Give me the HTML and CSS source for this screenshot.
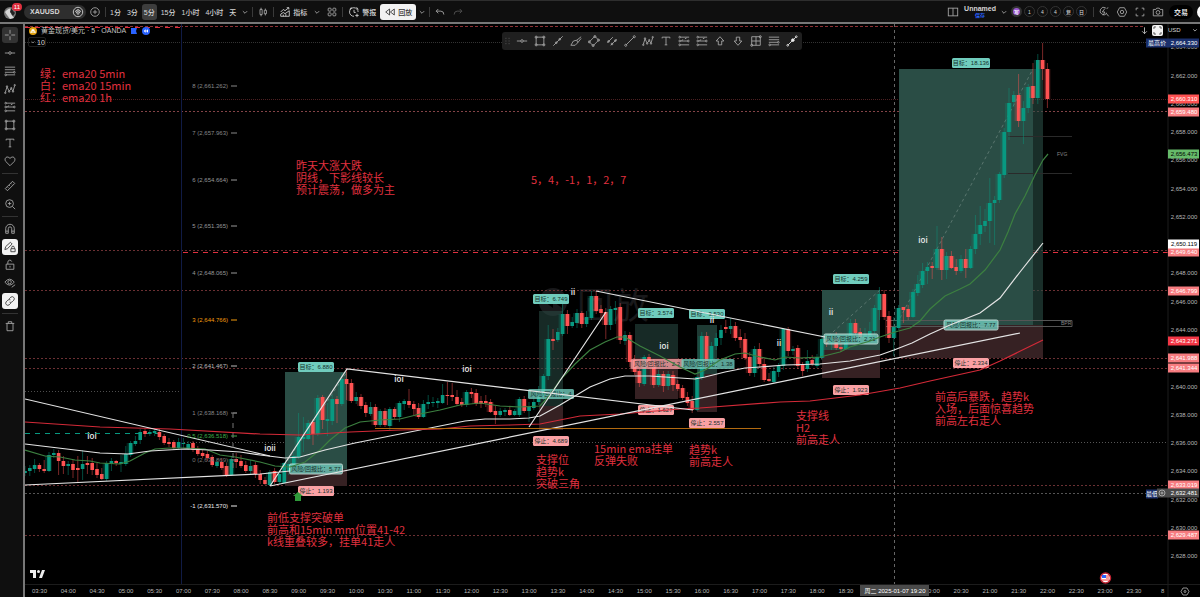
FILE: index.html
```html
<!DOCTYPE html>
<html lang="zh-CN">
<head>
  <meta charset="UTF-8">
  <meta name="viewport" content="width=device-width, initial-scale=1.0">
  <title>XAUUSD</title>
  <link rel="stylesheet" href="styles.css">
</head>
<body>
  <!-- Icon sprite -->
  <svg class="sprite" aria-hidden="true">
    <symbol id="i-plus" viewBox="0 0 14 14"><circle cx="7" cy="7" r="5"/><path d="M4.500 7h5M7 4.500v5"/></symbol>
    <symbol id="i-chev" viewBox="0 0 14 14"><path d="M4.500 6l2.500 2.500L9.500 6"/></symbol>
    <symbol id="i-candles" viewBox="0 0 14 14"><path d="M3.500 4h2.500v6H3.500zM4.750 2v2M4.750 10v2M8.500 5h2.500v4H8.500zM9.750 3v2M9.750 9v2"/></symbol>
    <symbol id="i-indicator" viewBox="0 0 14 14"><path d="M2 12V9.500l3-2 2 1.500 5-3.500V12zM5 10v2M8 9.500V12M2 7l3-3 2 1.500L11.500 2M9 2h2.500v2"/></symbol>
    <symbol id="i-grid" viewBox="0 0 14 14"><rect x="2.500" y="2.500" width="3.500" height="3.500" rx="1"/><rect x="8" y="2.500" width="3.500" height="3.500" rx="1"/><rect x="2.500" y="8" width="3.500" height="3.500" rx="1"/><rect x="8" y="8" width="3.500" height="3.500" rx="1"/></symbol>
    <symbol id="i-alarm" viewBox="0 0 14 14"><path d="M11.800 7A5 5 0 1 0 7 12M7 4.500V7.500H9M2 4l2-2.500M10 1.500L12 4M10.500 9v4M8.500 11h4"/></symbol>
    <symbol id="i-replay" viewBox="0 0 14 14"><path d="M6.500 3.500v7L2 7zM12 3.500v7L7.500 7z"/></symbol>
    <symbol id="i-undo" viewBox="0 0 14 14"><path d="M5 3.500L2.500 6 5 8.500M2.500 6H8q3.500 0 3.500 4"/></symbol>
    <symbol id="i-redo" viewBox="0 0 14 14"><path d="M9 3.500L11.500 6 9 8.500M11.500 6H6Q2.500 6 2.500 10"/></symbol>
    <symbol id="i-layout" viewBox="0 0 14 14"><rect x="1.500" y="2.500" width="11" height="9"/><path d="M7 2.500v9"/></symbol>
    <symbol id="i-search" viewBox="0 0 14 14"><path d="M9.500 8.500l3 3.500M8 3L5 7h3L6 11M9 2.200A4.300 4.300 0 1 0 10.500 8M10 3l2-1"/></symbol>
    <symbol id="i-gear" viewBox="0 0 14 14"><path d="M4.200 2h5.600l2.700 5-2.700 5H4.200L1.500 7z"/><circle cx="7" cy="7" r="2"/></symbol>
    <symbol id="i-full" viewBox="0 0 14 14"><path d="M2.500 5V2.500H5M9 2.500h2.500V5M11.500 9v2.500H9M5 11.500H2.500V9"/></symbol>
    <symbol id="i-camera" viewBox="0 0 14 14"><path d="M1.500 4h3L5.500 2.500h3L9.500 4h3v7.500h-11z"/><circle cx="7" cy="7.500" r="2.200"/></symbol>
    <symbol id="i-cross" viewBox="0 0 14 14"><path d="M7 1v4.500M7 8.500V13M1 7h4.500M8.500 7H13"/></symbol>
    <symbol id="i-hline" viewBox="0 0 14 14"><path d="M1 7h4.500M8.500 7H13"/><circle cx="7" cy="7" r="1.500"/></symbol>
    <symbol id="i-fib" viewBox="0 0 14 14"><path d="M1 2.500h12M1 5.500h12M1 8.500h10M3 11.500h10"/><circle cx="12" cy="8.500" r="1"/><circle cx="2" cy="11.500" r="1"/></symbol>
    <symbol id="i-wave" viewBox="0 0 14 14"><path d="M1.500 11L3.500 4.500 6 9.500 8.500 6.500 10.500 9.500 12.500 3"/><circle cx="1.500" cy="11.500" r=".8"/><circle cx="3.500" cy="4" r=".8"/><circle cx="6" cy="10" r=".8"/><circle cx="8.500" cy="6" r=".8"/><circle cx="10.500" cy="10" r=".8"/><circle cx="12.500" cy="2.500" r=".8"/></symbol>
    <symbol id="i-forecast" viewBox="0 0 14 14"><path d="M3 2.500h10M3 7h8M3 11.500h10M4 6.500l2-1M8 4.500l2-1"/><circle cx="2" cy="2.500" r="1"/><circle cx="2" cy="7" r="1"/><circle cx="2" cy="11.500" r="1"/><circle cx="12" cy="7" r="1"/></symbol>
    <symbol id="i-rect" viewBox="0 0 14 14"><path d="M2.500 2.500h9v9h-9z"/><circle cx="2.500" cy="2.500" r="1.200"/><circle cx="11.500" cy="2.500" r="1.200"/><circle cx="2.500" cy="11.500" r="1.200"/><circle cx="11.500" cy="11.500" r="1.200"/></symbol>
    <symbol id="i-text" viewBox="0 0 14 14"><path d="M2.500 4V2.500h9V4M7 2.500v9M5.500 11.500h3"/></symbol>
    <symbol id="i-heart" viewBox="0 0 14 14"><path d="M7 12.500L2 7.500C-.5 4 3.500 0 7 4 10.500 0 14.500 4 12 7.500z"/></symbol>
    <symbol id="i-ruler" viewBox="0 0 14 14"><path d="M1.500 10L10 1.500 12.500 4 4 12.500zM4 8l1 1M6 6l1 1M8 4l1 1"/></symbol>
    <symbol id="i-zoom" viewBox="0 0 14 14"><circle cx="6.500" cy="6.500" r="4.500"/><path d="M10 10l3 3M4.500 6.500h4M6.500 4.500v4"/></symbol>
    <symbol id="i-magnet" viewBox="0 0 14 14"><path d="M2 12V6.500a5 5 0 0 1 10 0V12H9V6.500a2 2 0 0 0-4 0V12zM2 9.500h3M9 9.500h3"/></symbol>
    <symbol id="i-penlock" viewBox="0 0 14 14"><path d="M1 10l1-3.500L7.500 1.500l2 2L4 9zM8 9h5v3.500H8zM9 9V7.500a1.500 1.500 0 0 1 3 0V9"/></symbol>
    <symbol id="i-unlock" viewBox="0 0 14 14"><path d="M2.500 6h9v6h-9zM4.500 6V3.500a2.300 2.300 0 0 1 4.500-.5M7 8v2"/></symbol>
    <symbol id="i-eye" viewBox="0 0 14 14"><path d="M1 6q5.500-7 11 0-5.500 7-11 0z"/><circle cx="6.500" cy="6" r="2"/><path d="M9 12l4-3"/></symbol>
    <symbol id="i-link" viewBox="0 0 14 14"><path d="M6 4.500l2-2a2.500 2.500 0 0 1 3.500 3.500l-2 2a2.500 2.500 0 0 1-3 .3M8 9.500l-2 2A2.500 2.500 0 0 1 2.500 8l2-2a2.500 2.500 0 0 1 3-.3"/></symbol>
    <symbol id="i-trash" viewBox="0 0 14 14"><path d="M2 4h10M5 4V2h4v2M3.500 4v8.500h7V4"/></symbol>
    <symbol id="i-grip" viewBox="0 0 14 14"><path d="M5 3v1M9 3v1M5 6.500v1M9 6.500v1M5 10v1M9 10v1"/></symbol>
    <symbol id="i-line" viewBox="0 0 14 14"><path d="M1.500 12.500l11-11"/><circle cx="5" cy="9" r="1"/><circle cx="9" cy="5" r="1"/></symbol>
    <symbol id="i-brush" viewBox="0 0 14 14"><path d="M1 12l3-5 4-1 1 3-3 3zM8 6l5-4M9 9l4-5"/></symbol>
    <symbol id="i-rot" viewBox="0 0 14 14"><path d="M1.500 8L8 1.500 12.500 6 6 12.500z"/><circle cx="1.500" cy="8" r="1.200"/><circle cx="8" cy="1.800" r="1.200"/><circle cx="12.300" cy="6" r="1.200"/><circle cx="6" cy="12.300" r="1.200"/></symbol>
    <symbol id="i-channel" viewBox="0 0 14 14"><path d="M1.500 9L8 2.500M5.500 12L12.500 5"/><circle cx="3" cy="7.500" r="1"/><circle cx="11" cy="6.500" r="1"/><circle cx="7" cy="10.500" r="1"/></symbol>
    <symbol id="i-trend" viewBox="0 0 14 14"><path d="M2.500 11.500l9-9"/><circle cx="2" cy="12" r="1.200"/><circle cx="12" cy="2" r="1.200"/></symbol>
    <symbol id="i-arrow" viewBox="0 0 14 14"><path d="M2.500 11.500l9-9"/><circle cx="2" cy="12" r="1"/><circle cx="8" cy="6" r="1.500" fill="currentColor"/><circle cx="12" cy="2" r="1"/></symbol>
    <symbol id="i-up" viewBox="0 0 14 14"><path d="M7 2L2.500 7H5v4.500h4V7h2.500z"/></symbol>
    <symbol id="i-down" viewBox="0 0 14 14"><path d="M7 12L2.500 7H5V2.500h4V7h2.500z"/></symbol>
    <symbol id="i-table" viewBox="0 0 14 14"><path d="M2 2h10v10H2zM7 2v10M2 7h10"/><circle cx="12" cy="2" r="1.200"/><circle cx="2" cy="12" r="1.200"/></symbol>
    <symbol id="i-down2" viewBox="0 0 14 14"><path d="M7 3v8M4 8l3 3 3-3"/></symbol>
  </svg>

  <header class="topbar">
    <button class="avatar" aria-label="账户">
      <svg viewBox="0 0 16 16"><circle cx="7" cy="9" r="6" fill="#777"/><path d="M2 8q4-5 7-3l2 3-3 2 3 4-4 1-3-4z" fill="#d5d5d5"/><path d="M8 4l4 5-2 3-3-4z" fill="#222"/></svg>
      <span class="badge">11</span>
    </button>
    <button class="symbol">XAUUSD <svg viewBox="0 0 14 14"><circle cx="7" cy="7" r="5.500"/><path d="M4 6l3-2 3 2-3 4z"/><circle cx="7" cy="6.500" r="1"/></svg></button>
    <button class="tool" aria-label="对比"><svg><use href="#i-plus"/></svg></button>
    <span class="sep"></span>
    <nav class="frames">
      <button>1分</button><button>3分</button><button class="active">5分</button><button>15分</button><button>1小时</button><button>4小时</button><button>天</button>
    </nav>
    <button class="chev" aria-label="更多周期"><svg><use href="#i-chev"/></svg></button>
    <span class="sep"></span>
    <button class="tool" aria-label="K线图"><svg><use href="#i-candles"/></svg></button>
    <span class="sep"></span>
    <button class="labelled"><svg><use href="#i-indicator"/></svg>指标</button>
    <button class="chev" aria-label="收藏指标"><svg><use href="#i-chev"/></svg></button>
    <button class="tool" aria-label="模板"><svg><use href="#i-grid"/></svg></button>
    <span class="sep"></span>
    <button class="labelled"><svg><use href="#i-alarm"/></svg>警报</button>
    <button class="labelled on"><svg><use href="#i-replay"/></svg>回放</button>
    <button class="chev" aria-label="回放选项"><svg><use href="#i-chev"/></svg></button>
    <span class="sep"></span>
    <button class="tool" aria-label="撤销"><svg><use href="#i-undo"/></svg></button>
    <button class="tool dim" aria-label="重做"><svg><use href="#i-redo"/></svg></button>

    <div class="right">
      <button class="tool" aria-label="布局"><svg><use href="#i-layout"/></svg></button>
      <button class="layout-name">Unnamed<small>保存</small></button>
      <button class="chev" aria-label="布局列表"><svg><use href="#i-chev"/></svg></button>
      <div class="dots">
        <button class="purple">写</button><button>1</button><button>4</button><button>4</button><button>复</button><button>日</button>
      </div>
      <span class="sep"></span>
      <button class="tool" aria-label="快速搜索"><svg><use href="#i-search"/></svg></button>
      <button class="tool" aria-label="设置"><svg><use href="#i-gear"/></svg></button>
      <button class="tool" aria-label="全屏"><svg><use href="#i-full"/></svg></button>
      <button class="tool" aria-label="快照"><svg><use href="#i-camera"/></svg></button>
      <button class="trade">交易</button>
      <button class="publish" aria-label="发布"></button>
    </div>
  </header>

  <main class="workspace">
    <aside class="sidebar">
      <button class="active" aria-label="十字线"><svg><use href="#i-cross"/></svg></button>
      <button aria-label="水平线"><svg><use href="#i-hline"/></svg></button>
      <button aria-label="斐波那契"><svg><use href="#i-fib"/></svg></button>
      <button aria-label="形态"><svg><use href="#i-wave"/></svg></button>
      <button aria-label="预测"><svg><use href="#i-forecast"/></svg></button>
      <button aria-label="矩形"><svg><use href="#i-rect"/></svg></button>
      <button aria-label="文本"><svg><use href="#i-text"/></svg></button>
      <button aria-label="图标"><svg><use href="#i-heart"/></svg></button>
      <hr>
      <button aria-label="测量"><svg><use href="#i-ruler"/></svg></button>
      <button aria-label="放大"><svg><use href="#i-zoom"/></svg></button>
      <hr>
      <button aria-label="磁铁"><svg><use href="#i-magnet"/></svg></button>
      <button class="on" aria-label="保持绘图"><svg><use href="#i-penlock"/></svg></button>
      <button aria-label="锁定"><svg><use href="#i-unlock"/></svg></button>
      <button aria-label="隐藏"><svg><use href="#i-eye"/></svg></button>
      <button class="on" aria-label="同步"><svg><use href="#i-link"/></svg></button>
      <hr>
      <button aria-label="删除"><svg><use href="#i-trash"/></svg></button>
    </aside>

    <section class="chart">
      <svg class="plot" viewBox="25 24 1175 573" preserveAspectRatio="xMinYMin meet">
        <g class="watermark">
          <circle cx="553" cy="302" r="14"/>
          <path d="M553 296v12l-8-6zM562 296v12l-8-6z" fill="#000"/>
          <text x="577" y="319">回放</text>
        </g>
        <g id="levels"></g>
        <path d="M181.500 24V584" stroke="#101b45"/>
        <path d="M894.500 24V584" stroke="#666" stroke-dasharray="3 3"/>
        <g id="trades"></g>
        <g fill="none" stroke="#555">
          <path d="M886 320.500H1072V326.500H886"/>
          <path d="M1008 136.500H1072M1008 173.500H1072" stroke="#2a2a2a"/>
        </g>
        <path d="M284 466L347 372M824 340L880 290M900 318L1033 69" stroke="#78908a" stroke-width=".6" stroke-dasharray="3 3" fill="none"/>
        <g id="candles"></g>
        <g id="tags"></g>

        <!-- moving averages -->
        <g class="ma">
          <polyline stroke="#3c8040" points="25,450 45,456 60,457 75,460 90,461 100,463 120,464 130,461 145,453 155,449 170,448 185,448 205,449 220,455 235,457 260,462 275,466 290,467 305,462 320,450 330,440 345,428 360,422 380,420 400,419 420,414 440,410 460,405 480,403 500,406 520,407 540,406 550,395 560,380 575,364 590,350 605,342 617,337 625,337 640,346 660,356 680,367 695,374 705,370 720,360 735,354 745,353 760,357 775,360 785,357 800,358 820,357 840,352 850,347 870,341 880,337 895,332 910,328 920,321 930,309 945,296 960,289 970,284 985,270 1000,250 1008,232 1015,214 1025,196 1035,175 1043,160 1048,154"/>
          <polyline class="w" points="25,444 50,447 75,450 100,453 128,454 150,451 185,449 210,450 240,452 260,455 285,458 300,457 325,450 355,443 390,436 430,428 465,421 485,419 510,419 529,418 540,416 560,405 590,387 610,379 625,376 650,376 680,378 695,379 705,377 725,372 745,368 760,367 785,365 820,364 850,361 880,355 894,350 912,343 930,334 950,325 980,313 1000,298 1020,272 1043,243"/>
          <polyline stroke="#d32a38" points="25,422 100,427 170,429 260,434 300,435 350,432 400,430 440,429 470,426 510,425 540,424 580,416 620,414 680,409 700,408 780,402 810,401 860,395 900,388 930,381 980,370 1000,361 1043,340"/>
        </g>
        <!-- drawn trend lines -->
        <g class="ma w">
          <path d="M25 399L270 456M25 485L260 474 290 471M270 486L347 369 693 410M270 486L1020 333M529 427L606 312M596 291L825 337"/>
        </g>
        <path d="M375 428.500H761" stroke="#b26a10"/>
        <path d="M298 492l5 4h-2v5h-6v-5h-2z" fill="#2f9a3a"/>

        <g id="fib"></g>
        <path d="M233 413h4M233 413V470" stroke="#777" stroke-dasharray="5 5" fill="none"/>
        <g id="marks" class="marks"></g>
        <g id="notes" class="notes"></g>

        <text class="tiny" x="1057" y="156">FVG</text>
        <text class="tiny" x="1061" y="325">BPR</text>

        <!-- brand mark -->
        <path d="M30 570h6v8h-3v-5h-3zM39 578l3-8h3l-3 8z" fill="#eee"/><circle cx="38.500" cy="571.500" r="1.500" fill="#eee"/>
        <g>
          <circle cx="1105.500" cy="578" r="5" fill="#fff" stroke="#c22433" stroke-width="1.500"/>
          <path d="M1102 575h4v3h-4z" fill="#2962ff"/><path d="M1106 576h3M1106 578h3M1102 580h7" stroke="#e33"/>
        </g>

        <!-- axes -->
        <path d="M1168 24V597M25 584.500H1200" stroke="#1c1c1c"/>
        <g id="axis"></g>
        <g fill="none" stroke="#ccc" stroke-width=".7"><path d="M1183 588h4l2 3.500-2 3.500h-4l-2-3.500z"/><circle cx="1185" cy="591.500" r="1"/></g>
      </svg>

      <div class="legend">
        <svg class="gold" viewBox="0 0 14 14"><circle cx="7" cy="7" r="7"/><path d="M5 4h4l1 3H4zM3 7.500h3.500V10H2zM7.500 7.500H11L12 10H7.500z" fill="#fff"/></svg>
        <span>黄金现货/美元 · 5 · OANDA</span>
        <svg class="flag" viewBox="0 0 8 8"><path d="M1 1h6L6 4l1 3H1z"/></svg>
        <svg class="rew" viewBox="0 0 14 14"><circle cx="7" cy="7" r="7"/><path d="M6.500 4v6L3 7zM10.500 4v6L7 7z" fill="#fff"/></svg>
      </div>
      <button class="collapse"><svg><use href="#i-chev"/></svg>10</button>

      <div class="favorites">
        <svg class="grip"><use href="#i-grip"/></svg>
        <button aria-label="水平线"><svg><use href="#i-hline"/></svg></button>
        <button aria-label="矩形"><svg><use href="#i-rect"/></svg></button>
        <button aria-label="直线"><svg><use href="#i-line"/></svg></button>
        <button aria-label="画笔"><svg><use href="#i-brush"/></svg></button>
        <button aria-label="旋转矩形"><svg><use href="#i-rot"/></svg></button>
        <button aria-label="平行通道"><svg><use href="#i-channel"/></svg></button>
        <button aria-label="趋势线"><svg><use href="#i-trend"/></svg></button>
        <button aria-label="形态"><svg><use href="#i-wave"/></svg></button>
        <button aria-label="文本"><svg><use href="#i-text"/></svg></button>
        <button aria-label="多头"><svg><use href="#i-forecast"/></svg></button>
        <button aria-label="空头"><svg><use href="#i-forecast"/></svg></button>
        <button aria-label="向上箭头"><svg><use href="#i-up"/></svg></button>
        <button aria-label="向下箭头"><svg><use href="#i-down"/></svg></button>
        <button aria-label="江恩箱"><svg><use href="#i-table"/></svg></button>
        <button aria-label="斐波那契"><svg><use href="#i-fib"/></svg></button>
        <button class="bright" aria-label="箭头"><svg><use href="#i-arrow"/></svg></button>
      </div>

      <div class="scale-tools">
        <button aria-label="下移"><svg><use href="#i-down2"/></svg></button>
        <button class="on" aria-label="最大化"><svg><use href="#i-full"/></svg></button>
        <select aria-label="货币"><option>USD</option></select>
        <svg><use href="#i-chev"/></svg>
      </div>
    </section>
  </main>

  <script src="chart.js"></script>
</body>
</html>
```
FILE: styles.css
```css
* {
  box-sizing: border-box;
}
body {
  margin: 0;
  height: 100vh;
  display: flex;
  flex-direction: column;
  overflow: hidden;
  background: #000;
  color: #d6d6d6;
  font-family: "Liberation Sans", "Noto Sans CJK SC", sans-serif;
  font-size: 7px;
}
button, select {
  margin: 0;
  padding: 0;
  border: 0;
  background: none;
  color: inherit;
  font: inherit;
  cursor: pointer;
}
svg {
  fill: none;
  stroke: currentColor;
}
button svg {
  display: block;
  width: 12px;
  height: 12px;
  flex: none;
}
.sprite {
  display: none;
}

/* top bar */
.topbar {
  display: flex;
  align-items: center;
  flex: none;
  height: 24px;
  padding-left: 3px;
  background: #0f0f0f;
  border-top: 1px solid #2e2e2e;
  border-bottom: 2px solid #777;
  font-weight: 500;
}
.topbar button {
  display: flex;
  align-items: center;
  justify-content: center;
  flex: none;
  height: 16px;
  border-radius: 3px;
}
.topbar .avatar {
  position: relative;
  width: 16px;
  margin-right: 5px;
}
.avatar svg {
  width: 16px;
  height: 16px;
  stroke: none;
}
.badge {
  position: absolute;
  top: -1px;
  right: -3px;
  padding: 0 2px;
  border-radius: 4px;
  background: #e0303f;
  color: #fff;
  font-size: 6px;
  line-height: 8px;
}
.topbar .symbol {
  justify-content: space-between;
  width: 62px;
  height: 14px;
  padding: 0 2px 0 6px;
  border-radius: 7px;
  background: #2e2e2e;
  font-weight: bold;
}
.topbar .tool {
  width: 18px;
  color: #aaa;
}
.topbar .dim {
  color: #555;
}
.topbar .chev {
  width: 12px;
  color: #aaa;
}
.sep {
  flex: none;
  width: 1px;
  height: 10px;
  margin: 0 1px;
  background: #3a3a3a;
}
.frames {
  display: flex;
}
.frames button {
  padding: 0 2px;
  margin: 0 1px;
}
.frames .active {
  background: #3d3d3d;
}
.topbar .labelled {
  gap: 2px;
  padding: 0 4px;
}
.topbar .on {
  background: #f2f2f2;
  color: #333;
}
.right {
  display: flex;
  align-items: center;
  margin-left: auto;
  overflow: hidden;
}
.topbar .layout-name {
  flex-direction: column;
  padding: 0 2px;
  font-weight: bold;
  line-height: 8px;
}
.layout-name small {
  color: #2962ff;
  font-size: 5px;
  line-height: 5px;
}
.dots {
  display: flex;
  gap: 2px;
  margin: 0 5px 0 1px;
}
.topbar .dots button {
  width: 11px;
  height: 11px;
  border: 1px solid #333;
  border-radius: 50%;
  font-size: 5px;
}
.topbar .dots .purple {
  border-width: 2px;
  background: #9b59d0;
  color: #fff;
}
.topbar .trade {
  width: 24px;
  height: 14px;
  margin: 0 4px 0 2px;
  border-radius: 7px;
  background: #000;
  color: #fff;
}
.topbar .publish {
  width: 14px;
  height: 14px;
  margin-right: -11px;
  border-radius: 7px;
  background: #fff;
}

/* drawing tools */
.workspace {
  display: flex;
  flex: 1;
  min-height: 0;
}
.sidebar {
  display: flex;
  flex-direction: column;
  flex: none;
  width: 25px;
  padding: 2px 4px 0 1px;
  background: #0f0f0f;
  border-right: 2px solid #777;
}
.sidebar button {
  display: flex;
  align-items: center;
  justify-content: center;
  flex: none;
  width: 16px;
  height: 16px;
  margin: 1px;
  border-radius: 3px;
  color: #aaa;
}
.sidebar .active {
  background: #333;
}
.sidebar .on {
  background: #f2f2f2;
  color: #333;
}
.sidebar hr {
  flex: none;
  width: 16px;
  height: 1px;
  margin: 3px 1px;
  border: 0;
  background: #333;
}

/* chart */
.chart {
  position: relative;
  flex: 1;
  min-width: 0;
}
.plot {
  display: block;
  width: 100%;
  stroke: none;
}
.plot text {
  stroke: none;
}
.watermark {
  fill: #19191b;
}
.watermark text {
  font-size: 36px;
}
.ma {
  fill: none;
  stroke-width: 1.2;
}
.w {
  stroke: #e4e4e4;
}
.notes {
  fill: #e0303f;
  font-family: "Noto Sans CJK SC", sans-serif;
  font-size: 11px;
}
.marks {
  fill: #eee;
  font-family: "Open Sans", sans-serif;
  font-size: 8px;
  font-weight: 600;
  text-anchor: middle;
}
.axis-text, .fib-text {
  font-size: 6px;
}
.fib-text {
  text-anchor: end;
}
.axis-text {
  text-anchor: middle;
}
.tag-text {
  fill: #14302b;
  font-size: 6px;
  text-anchor: middle;
}
.tiny {
  fill: #888;
  font-size: 5px;
}

/* overlays */
.legend {
  position: absolute;
  top: 2px;
  left: 4px;
  display: flex;
  align-items: center;
  gap: 4px;
  line-height: 9px;
  color: #c5c5c5;
}
.legend svg {
  width: 8px;
  height: 8px;
  stroke: none;
}
.legend .gold {
  fill: #e0a010;
}
.legend .flag, .legend .rew {
  fill: #2962ff;
}
.collapse {
  position: absolute;
  top: 13px;
  left: 3px;
  display: flex;
  align-items: center;
  width: 18px;
  height: 10px;
  border: 1px solid #1f1f1f;
  border-radius: 2px;
}
.collapse svg {
  width: 8px;
  height: 8px;
}
.favorites {
  position: absolute;
  top: 8px;
  left: 477px;
  display: flex;
  align-items: center;
  height: 18px;
  padding-right: 1px;
  border-radius: 3px;
  background: #1f1f1f;
  color: #aaa;
}
.favorites .grip {
  width: 11px;
  height: 12px;
  color: #777;
}
.favorites button {
  display: flex;
  justify-content: center;
  width: 18px;
}
.favorites .bright {
  color: #eee;
}
.scale-tools {
  position: absolute;
  top: 0;
  right: 0;
  display: flex;
  align-items: center;
  gap: 2px;
  height: 12px;
}
.scale-tools button {
  width: 11px;
  height: 11px;
  border-radius: 2px;
}
.scale-tools .on {
  background: #f2f2f2;
  color: #333;
}
.scale-tools button svg {
  width: 11px;
  height: 11px;
}
.scale-tools select {
  appearance: none;
  width: 20px;
  margin-left: 3px;
  font-size: 6px;
}
.scale-tools > svg {
  width: 10px;
  height: 10px;
}
```
FILE: chart.js
```js
const NS = 'http://www.w3.org/2000/svg';
const GREEN = '#089981';
const RED = '#ff5252';

function add(parent, tag, attrs, text) {
  const el = document.createElementNS(NS, tag);
  for (const key in attrs) el.setAttribute(key, attrs[key]);
  if (text !== undefined) el.textContent = text;
  document.getElementById(parent).appendChild(el);
}

// Horizontal levels: y, x1, x2, colour, dash
const levels = [
  [26.5, 25, 1143, '#8c2f35', '3 2'], [27.5, 25, 184, '#e0303f', '5 5'],
  [42.5, 25, 1146, '#333', '1 1'], [99.5, 25, 1168, '#4d2022', '1 1'],
  [111.5, 25, 1168, '#834347', '2 2'], [250.5, 25, 1168, '#6b3033', '2 2'],
  [252.5, 183, 1168, '#e0303f', '5 5'], [290.5, 25, 1168, '#6b3033', '2 2'],
  [358.5, 25, 1168, '#6b3033', '2 2'], [368.5, 25, 1168, '#6b3033', '2 2'],
  [391.5, 25, 183, '#4d4d4d', '1 2'], [433.5, 25, 165, '#089981', '5 5'],
  [442.5, 181, 1168, '#555', '1 2'], [485.5, 25, 1168, '#6b3033', '2 2'],
  [493.5, 25, 1150, '#555', '2 2'], [535.5, 25, 1168, '#6b3033', '2 2']
];
levels.forEach(([y, x1, x2, stroke, dash]) =>
  add('levels', 'path', { d: `M${x1} ${y}H${x2}`, stroke, 'stroke-dasharray': dash }));

// Position boxes: x, width, top, entry, bottom, opacity
const boxes = [
  [285, 62, 372, 469, 486, 1], [539, 24, 311, 406, 430, 0.55], [635, 43, 324, 358, 399, 0.55],
  [697, 20, 325, 374, 412, 0.75], [822, 58, 290, 350, 378, 1], [899, 134, 69, 325, 358, 1],
  [1033, 10, 69, 325, 358, 0.6]
];
boxes.forEach(([x, width, top, entry, bottom, opacity]) => {
  add('trades', 'rect', { x, width, y: top, height: entry - top, fill: '#2a4d45', opacity });
  add('trades', 'rect', { x, width, y: entry, height: bottom - entry, fill: '#362123', opacity: 1 });
});

// Position labels: centre x, centre y, width, text, pink, outlined
const tags = [
  [316, 367, 36, '目标：6.880'], [316, 469, 53, '风险/回报比：5.77', 0, 1], [316, 491, 36, '停止：1.193', 1],
  [551, 299, 36, '目标：6.749'], [551, 394, 46, '风险/回报比：4'], [551, 441, 36, '停止：4.689', 1],
  [656, 313, 36, '目标：3.574'], [657, 364, 53, '风险/回报比：2.2', 1], [656, 410, 36, '停止：1.627', 1],
  [707, 314, 36, '目标：3.530'], [708, 364, 53, '风险/回报比：1.38'], [707, 423, 36, '停止：2.557', 1],
  [851, 279, 36, '目标：4.259'], [851, 339, 54, '风险/回报比：2.21', 0, 1], [851, 390, 36, '停止：1.923', 1],
  [971, 63, 38, '目标：18.136'], [971, 325, 54, '风险/回报比：7.77', 0, 1], [971, 363, 36, '停止：2.334', 1]
];
tags.forEach(([x, y, w, text, pink, outlined]) => {
  add('tags', 'rect', {
    x: x - w / 2, y: y - 5, width: w, height: 10, rx: 1.5, opacity: w > 40 ? 0.8 : 1,
    fill: pink ? '#faa1a4' : '#70ccbd', stroke: outlined ? '#d8f5ef' : 'none'
  });
  add('tags', 'text', { x, y: y + 2, class: 'tag-text' }, text);
});

// Candles, 5 minutes each: direction, body top, body bottom, high, low
const candles = `
g471,473,466,476 g468,471,465,476 g465,469,459,473 r465,469,463,472 r469,471,460,473 g455,471,452,472
g453,455,449,458 r453,461,450,475 r461,466,456,474 g464,466,461,475 r464,470,460,478 r468,470,456,482
g464,469,450,480 r463,465,456,474 r463,470,458,475 r469,475,463,478 r474,479,468,480 g463,479,461,481
g461,464,458,471 r461,463,460,466 g462,464,455,472 g454,464,446,466 g443,455,441,457 g441,444,436,446
g432,440,429,444 r431,434,429,437 g432,434,430,436 g431,433,429,436 r432,437,429,440 r436,443,434,445
r442,444,438,447 r442,448,440,450 g442,448,438,450 g443,444,438,448 g444,449,441,450 r443,450,441,452
r448,454,446,456 r453,456,450,458 r454,458,451,461 r457,465,455,467 g462,466,459,468 r462,468,458,470
r466,476,463,477 g459,475,456,476 r459,462,453,468 r461,466,455,468 r465,471,461,473 g466,471,460,474
r465,474,462,478 r474,480,470,484 r480,484,477,485 g472,485,470,486 r471,482,468,484 g474,482,470,484
g463,483,462,484 g464,471,460,475 g456,466,452,470 g437,457,413,459 g437,439,417,452 g423,439,420,440
r422,434,419,445 g398,434,395,436 r397,420,395,429 g419,421,403,436 g399,421,395,425 r399,404,396,423
g379,404,373,406 r379,384,370,400 r383,401,379,403 g397,401,392,404 r397,406,394,409 r405,413,402,417
g407,414,402,416 r407,425,404,427 g411,425,409,427 r411,425,408,427 g409,426,407,430 r409,417,407,419
g403,417,401,422 g401,404,399,410 r401,405,389,408 r404,409,401,415 r408,417,403,419 g404,417,400,418
g402,404,395,409 g402,403,397,407 g401,403,398,408 g395,403,384,404 r395,396,382,405 r395,397,383,401
r397,404,390,406 r402,405,398,407 g392,405,390,407 r392,394,388,398 r393,404,389,406 r401,404,396,408
r401,403,395,407 r402,412,399,413 r411,415,406,424 g411,415,408,417 g410,412,408,416 r410,415,407,416
g411,415,409,416 g399,415,397,417 r399,411,396,413 g407,411,402,422 g402,408,392,410 g394,402,386,405
g376,396,374,400 g339,376,325,380 r339,341,329,350 g332,340,328,342 g314,334,304,336 r314,326,310,334
g322,326,317,328 g313,323,309,328 r313,324,311,328 g317,324,311,327 g296,318,291,320 r296,311,291,314
r309,313,305,318 r312,325,308,339 g309,325,306,330 g308,310,301,324 r307,340,303,344 g335,341,331,345
r335,362,332,367 r360,372,355,375 r371,383,369,387 g357,384,355,386 r357,364,354,369 r362,385,359,388
g374,385,370,387 r374,386,371,392 g374,386,371,390 r375,385,371,391 r384,389,380,391 r388,398,385,400
r397,403,392,406 r401,410,396,413 g377,410,374,411 g336,378,332,380 r336,367,332,370 g346,367,342,369
g338,346,333,350 g330,338,325,345 r327,329,320,333 g326,329,318,334 r326,338,322,341 r337,340,329,348
r339,358,333,360 r357,373,352,376 g349,373,346,377 r349,364,343,368 r364,380,358,382 r379,381,373,382
g371,382,367,383 g366,372,363,377 g329,366,328,370 r329,351,327,356 g349,351,346,355 r348,366,345,369
r365,371,362,376 g361,369,350,372 r360,364,355,366 g357,366,354,368 g339,358,335,360 r339,344,336,347
g339,343,334,350 r338,348,332,350 r347,349,341,352 g338,349,334,350 g323,339,319,341 r323,333,319,336
r332,337,328,340 g334,338,328,342 g331,337,322,341 g308,331,305,334 g294,310,287,320 r294,317,290,320
r316,338,311,343 g327,338,317,356 g308,328,305,330 r307,310,307,323 r309,317,305,320 g292,317,289,318
g284,293,275,296 g271,285,263,288 g267,271,262,284 r266,268,262,279 g249,268,226,270 r249,270,237,280
g256,270,252,279 r256,268,251,269 r267,271,259,275 g259,271,255,273 r259,268,249,278 g249,268,246,269
g234,249,215,254 g225,234,206,245 g221,226,209,232 g203,221,178,243 g200,203,196,245 g174,200,172,203
g132,175,128,178 g103,132,88,140 g95,102,91,107 r95,121,74,127 g108,121,101,144 g87,108,84,113
r86,98,63,104 g60,98,54,104 r60,69,43,80 r69,99,63,108`.trim().split(/\s+/);

candles.forEach((c, i) => {
  const fill = c[0] === 'g' ? GREEN : RED;
  const [top, bottom, high, low] = c.slice(1).split(',').map(Number);
  const x = 25 + i * 4.8;
  const body = Math.max(bottom - top, 1);
  if (body > 8) add('candles', 'rect', { x: x - 4, y: top, width: 7, height: body, fill, opacity: 0.22 });
  add('candles', 'path', { d: `M${x} ${high}V${low}`, stroke: fill, 'stroke-width': 0.8, opacity: 0.6 });
  add('candles', 'rect', { x: x - 1.8, y: top, width: 3.6, height: body, fill });
});

// Fib extension labels
const fib = [
  [86, '8 (2,661.262)', '#888'], [133, '7 (2,657.963)', '#888'], [180, '6 (2,654.664)', '#999'],
  [226, '5 (2,651.365)', '#999'], [273, '4 (2,648.065)', '#999'], [320, '3 (2,644.766)', '#f59d0e'],
  [366, '2 (2,641.467)', '#bbb'], [413, '1 (2,638.168)', '#888'], [436, '0.5 (2,636.518)', '#3fae48'],
  [460, '0 (2,634.869)', '#777'], [506, '-1 (2,631.570)', '#eee']
];
fib.forEach(([y, text, color]) => {
  add('fib', 'text', { x: 228, y: y + 2, fill: color, class: 'fib-text' }, text);
  add('fib', 'path', { d: `M231 ${y}H237`, stroke: color });
});

const marks = [
  [92, 439, 'ioi'], [270, 451, 'ioii'], [399, 382, 'ioi'], [467, 372, 'ioi'], [573, 295, 'ii'],
  [664, 349, 'ioi'], [712, 323, 'ii'], [779, 346, 'ii'], [831, 315, 'ii'], [923, 243, 'ioi']
];
marks.forEach(([x, y, text]) => add('marks', 'text', { x, y }, text));

const notes = [
  [40, 78, ['绿：ema20 5min', '白：ema20 15min', '红：ema20 1h']],
  [296, 170, ['昨天大涨大跌', '阴线，下影线较长', '预计震荡，做多为主']],
  [531, 184, ['5，4，-1，1，2，7']],
  [267, 522, ['前低支撑突破单', '前高和15min mm位置41-42', 'k线重叠较多，挂单41走人']],
  [536, 464, ['支撑位', '趋势k', '突破三角']],
  [594, 453, ['15min ema挂单', '反弹失败']],
  [689, 454, ['趋势k', '前高走人']],
  [796, 420, ['支撑线', 'H2', '前高走人']],
  [935, 401, ['前高后暴跌，趋势k', '入场，后面惊喜趋势', '前高左右走人']]
];
notes.forEach(([x, y, lines]) =>
  lines.forEach((line, i) => add('notes', 'text', { x, y: y + i * 12 }, line)));

// Price axis
for (let p = 2664; p >= 2628; p -= 2) {
  const y = 75.5 + (2662 - p) * 14.14;
  add('axis', 'text', { x: 1184, y: y + 2, fill: '#b8b8b8', class: 'axis-text' }, `2,${p - 2000}.000`);
}
const prices = [
  [43, '2,664.330', '#1a2f6b'], [99, '2,660.310', '#ff5252'], [112, '2,659.480', '#f77c80'],
  [154, '2,656.473', '#66bb6a', '#000'], [252, '2,649.640', '#f77c80'], [244, '2,650.119', '#fff', '#000'],
  [291, '2,646.799', '#f77c80'], [341, '2,643.271', '#f23645'], [358, '2,641.988', '#f77c80'],
  [368, '2,641.344', '#f77c80'], [485, '2,633.019', '#f77c80'], [493, '2,632.481', '#4a4a4a'],
  [535, '2,629.487', '#f77c80']
];
prices.forEach(([y, text, fill, color]) => {
  add('axis', 'rect', { x: 1168, y: y - 4.5, width: 31, height: 9, fill });
  add('axis', 'text', { x: 1184, y: y + 2, fill: color || '#fff', class: 'axis-text' }, text);
});
add('axis', 'rect', { x: 1146, y: 38.5, width: 22, height: 9, fill: '#1a2f6b' });
add('axis', 'text', { x: 1157, y: 45, fill: '#fff', class: 'axis-text' }, '最高价');
add('axis', 'rect', { x: 1146, y: 489.5, width: 12, height: 9, fill: '#1a2f6b' });
add('axis', 'text', { x: 1152, y: 496, fill: '#fff', class: 'axis-text' }, '最低');
add('axis', 'rect', { x: 1157, y: 488.5, width: 11, height: 9, fill: '#4a4a4a' });
add('axis', 'path', { d: 'M1159 493a3 3 0 1 0 6 0a3 3 0 1 0-6 0M1160.500 493h3M1162 491.500v3', fill: 'none', stroke: '#ccc', 'stroke-width': 0.7 });

// Time axis
const times = ['03:30', '04:00', '04:30', '05:00', '05:30'];
for (let t = 14; t <= 47; t++) {
  times.push(`${String(Math.floor(t / 2)).padStart(2, '0')}:${t % 2 ? '30' : '00'}`);
}
times.push('8');
times.forEach((t, i) => {
  if (t === '19:00' || t === '19:30') return;
  add('axis', 'text', { x: 39.5 + i * 28.8, y: 593, fill: '#b8b8b8', class: 'axis-text' }, t);
});
add('axis', 'rect', { x: 860, y: 585, width: 69, height: 11, fill: '#4a4a4a' });
add('axis', 'text', { x: 895, y: 593, fill: '#fff', class: 'axis-text' }, '周二 2025-01-07   19:20');
```
